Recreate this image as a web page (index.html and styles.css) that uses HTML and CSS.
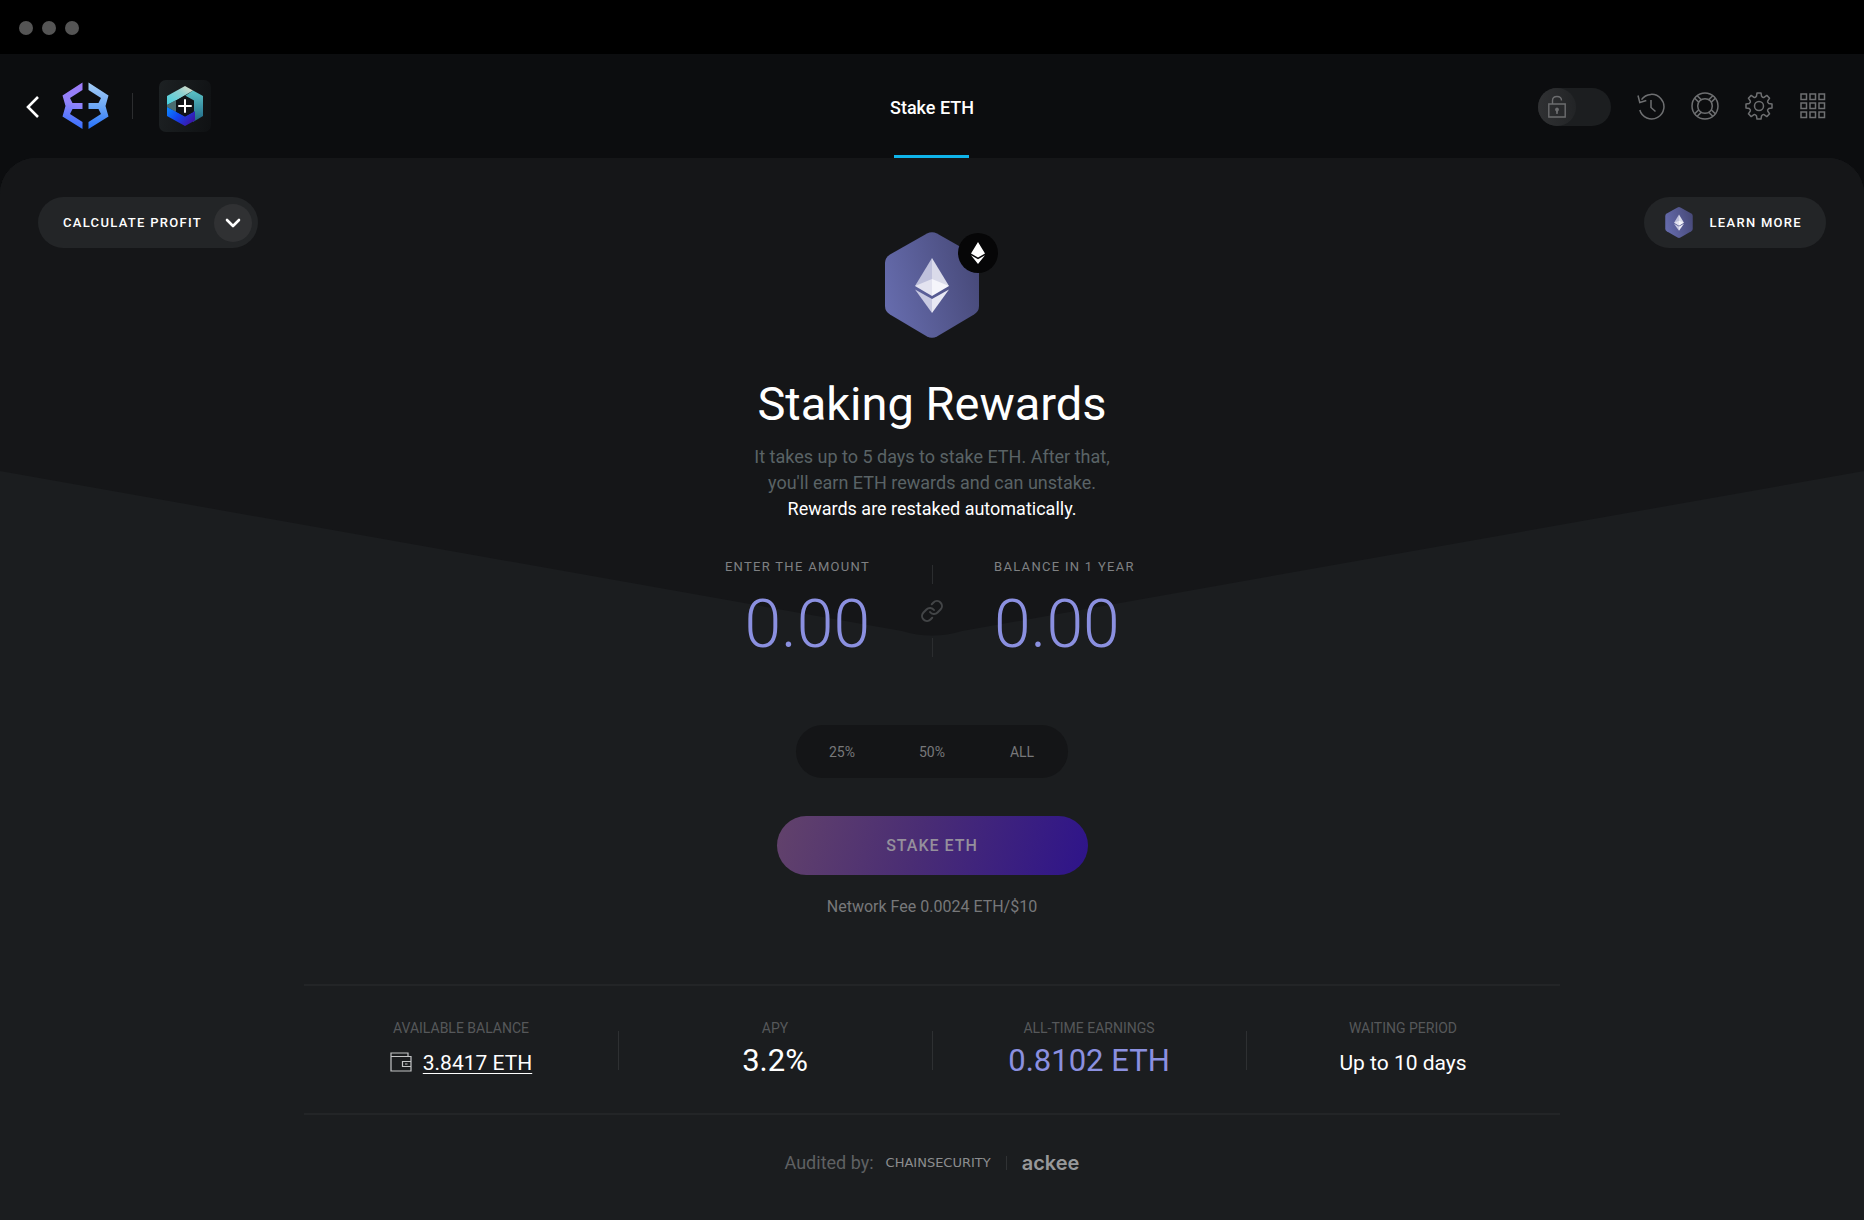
FILE: index.html
```html
<!DOCTYPE html>
<html lang="en">
<head>
<meta charset="utf-8">
<meta name="viewport" content="width=device-width, initial-scale=1">
<title>Stake ETH</title>
<link rel="stylesheet" href="styles.css">
</head>
<body>
<svg class="defs" width="0" height="0" aria-hidden="true">
  <defs>
    <linearGradient id="hex" x1="0" y1=".7" x2="1" y2=".4">
      <stop offset="0" stop-color="#666cad"/><stop offset="1" stop-color="#484a7a"/>
    </linearGradient>
    <linearGradient id="logo-left" x1=".6" y1="0" x2=".5" y2="1">
      <stop offset="0" stop-color="#9d7af8"/><stop offset=".45" stop-color="#9183fa"/><stop offset="1" stop-color="#2e70ff"/>
    </linearGradient>
    <linearGradient id="logo-right" x1=".5" y1="0" x2=".5" y2="1">
      <stop offset="0" stop-color="#a5cdf5"/><stop offset=".5" stop-color="#6ea8f5"/><stop offset="1" stop-color="#2470fb"/>
    </linearGradient>
    <linearGradient id="facet-top" x1="0" y1="1" x2="1" y2="0">
      <stop offset="0" stop-color="#3fd0e0"/><stop offset=".6" stop-color="#8fd0cf"/><stop offset="1" stop-color="#e8dfc8"/>
    </linearGradient>
    <linearGradient id="facet-right" x1="0" y1="0" x2="0" y2="1">
      <stop offset="0" stop-color="#5cc3c6"/><stop offset="1" stop-color="#1d6685"/>
    </linearGradient>
    <linearGradient id="facet-bottom" x1="0" y1="0" x2="1" y2=".6">
      <stop offset="0" stop-color="#0b8dff"/><stop offset=".5" stop-color="#1345ee"/><stop offset="1" stop-color="#3a16a8"/>
    </linearGradient>
    <symbol id="eth-hex" viewBox="0 0 94 106">
      <path fill="url(#hex)" d="M42 1.500q5-2.700 10 0l37 21q5 3 5 8.500v43q0 5.500-5 8.500l-37 22q-5 2.700-10 0l-37-22q-5-3-5-8.500V31q0-5.500 5-8.500z"/>
      <path fill="#bfc1dc" d="M47 26v28L30 54z"/>
      <path fill="#dadbea" d="M47 26v28l17 0z"/>
      <path fill="#e3e3f0" d="M30 54l17-7v17z"/>
      <path fill="#f5f5fb" d="M64 54l-17-7v17z"/>
      <path fill="#c9cae2" d="M30 57.500l17 9.500v14z"/>
      <path fill="#e8e8f4" d="M64 57.500l-17 9.500v14z"/>
    </symbol>
  </defs>
</svg>

<div class="titlebar" aria-hidden="true"><span></span><span></span><span></span></div>

<header class="header">
  <div class="brand">
    <button class="icon-button" type="button" aria-label="Back">
      <svg width="13" height="22" viewBox="0 0 13 22" fill="none" stroke="#fff" stroke-width="2.600"><path d="M12 1L2 11l10 10"/></svg>
    </button>
    <svg class="logo" width="47" height="48" viewBox="0 0 47 48" aria-hidden="true">
      <path fill="url(#logo-left)" d="M20.500.5V8L8 16l2.500 5h10v6h-10L8 32l12.500 8v7L.5 34.500 3.500 24 .5 13.500z"/>
      <path fill="url(#logo-right)" d="M26.500.5V8L39 16l-2.500 5h-10v6h10l2.500 5-12.500 8v7l20-12.500L43.500 24l3-10.500z"/>
    </svg>
    <span class="brand-divider"></span>
    <button class="app-tile" type="button" aria-label="Add portfolio">
      <svg width="36" height="40" viewBox="0 0 36 40">
        <path fill="url(#facet-right)" d="M26 4.500l10 5.500v20l-10 6v-21l-8-5z"/>
        <path fill="url(#facet-top)" d="M0 19V10L18 0l8 4.500-17 10z"/>
        <path fill="#4b6d70" d="M0 19l9-5v12L0 21z"/>
        <path fill="url(#facet-bottom)" d="M0 21l18 9.500L28 25v9.500L18 40 0 30z"/>
        <path fill="#101317" d="M18 9.500l9 5v11l-9 5-9-5v-11z"/>
        <path fill="none" stroke="#fff" stroke-width="2" stroke-linecap="round" d="M12 20h12M18 14v12"/>
      </svg>
    </button>
  </div>

  <nav class="tabs"><a class="tab" href="#stake" aria-current="page">Stake ETH</a></nav>

  <div class="tools">
    <label class="lock-switch">
      <input type="checkbox" role="switch" aria-label="Lock wallet">
      <span class="knob">
        <svg width="18" height="24" viewBox="0 0 18 24" fill="none" stroke="#6c6d6f" stroke-width="1.400">
          <path d="M.8 9h16.400v13H.8zM4.500 9V5.500q0-4 4.500-4t4.500 4"/>
          <path fill="#6c6d6f" stroke="none" d="M9 12.500a2 2 0 0 1 1 3.700l-.3 2.800H8.300L8 16.200a2 2 0 0 1 1-3.700z"/>
        </svg>
      </span>
    </label>
    <button class="icon-button" type="button" aria-label="History">
      <svg class="tool" viewBox="0 0 28 28"><path d="M4.500 7.700A12.300 12.300 0 1 1 2.800 18M1 3.500l1.800 7 6.500-2M14 8v7.500l4.500 4"/></svg>
    </button>
    <button class="icon-button" type="button" aria-label="Support">
      <svg class="tool" viewBox="0 0 28 28"><circle cx="14" cy="14" r="13"/><circle cx="14" cy="14" r="7.300"/><path d="M6.200 3.700l4.200 4.200M3.700 6.200l4.200 4.200M21.800 3.700l-4.200 4.200M24.300 6.200l-4.200 4.200M6.200 24.300l4.200-4.200M3.700 21.800l4.200-4.200M21.800 24.300l-4.200-4.200M24.300 21.800l-4.200-4.200"/></svg>
    </button>
    <button class="icon-button" type="button" aria-label="Settings">
      <svg class="tool" viewBox="-14 -14 28 28"><circle r="4.500"/><path stroke-linejoin="round" d="M-2.600-9.700L-2-13H2L2.600-9.700Q4 -8 5-8.700L7.800-10.600 10.600-7.800 8.700-5Q8-4 9.700-2.600L13-2V2L9.700 2.600Q8 4 8.700 5L10.600 7.800 7.800 10.600 5 8.700Q4 8 2.600 9.700L2 13H-2L-2.600 9.700Q-4 8-5 8.700L-7.800 10.600-10.600 7.800-8.700 5Q-8 4-9.700 2.600L-13 2V-2L-9.700-2.600Q-8-4-8.700-5L-10.600-7.800-7.800-10.600-5-8.700Q-4-8-2.600-9.700z"/></svg>
    </button>
    <button class="icon-button" type="button" aria-label="Apps">
      <svg class="tool" viewBox="0 0 28 28"><path d="M2 2h5.500v5.500H2zM11 2h5.500v5.500H11zM20 2h5.500v5.500H20zM2 11h5.500v5.500H2zM11 11h5.500v5.500H11zM20 11h5.500v5.500H20zM2 20h5.500v5.500H2zM11 20h5.500v5.500H11zM20 20h5.500v5.500H20z"/></svg>
    </button>
  </div>
</header>

<main class="main" id="stake">
  <svg class="backdrop" viewBox="0 0 1864 480" preserveAspectRatio="none" aria-hidden="true">
    <path fill="#151618" d="M0 0H1864V313L962 473Q932 482 902 473L0 313z"/>
  </svg>

  <div class="stage">
    <button class="pill-button calculate" type="button">
      Calculate profit
      <span class="pill-chevron"><svg width="16" height="10" viewBox="0 0 16 10" fill="none" stroke="#fff" stroke-width="2.600" stroke-linecap="round" stroke-linejoin="round"><path d="M2 2l6 6 6-6"/></svg></span>
    </button>

    <section class="hero">
      <div class="coin">
        <svg width="94" height="106" aria-hidden="true"><use href="#eth-hex"/></svg>
        <span class="coin-badge"><svg width="14" height="22" viewBox="0 0 14 22" fill="#fff" aria-hidden="true"><path d="M7 0l7 11.500L7 15.500 0 11.500zM0 13.200l7 4 7-4L7 22z"/></svg></span>
      </div>
      <h1>Staking Rewards</h1>
      <p class="intro">It takes up to 5 days to stake ETH. After that,<br>you'll earn ETH rewards and can unstake.<br><strong>Rewards are restaked automatically.</strong></p>

      <form class="stake-form">
        <div class="amounts">
          <div class="amount amount-enter">
            <label for="amount">Enter the amount</label>
            <input id="amount" type="text" inputmode="decimal" value="0.00">
          </div>
          <div class="linker" aria-hidden="true">
            <svg width="24" height="24" viewBox="0 0 24 24" fill="none" stroke="#434547" stroke-width="2" stroke-linecap="round"><path d="M10 13a5 5 0 0 0 7.540.540l3-3a5 5 0 0 0-7.070-7.070l-1.720 1.710M14 11a5 5 0 0 0-7.540-.540l-3 3a5 5 0 0 0 7.070 7.070l1.710-1.710"/></svg>
          </div>
          <div class="amount">
            <label for="balance">Balance in 1 year</label>
            <input id="balance" type="text" inputmode="decimal" value="0.00">
          </div>
        </div>
        <div class="presets">
          <button type="button">25%</button>
          <button type="button">50%</button>
          <button type="button">ALL</button>
        </div>
        <button class="submit" type="submit">Stake ETH</button>
        <p class="fee">Network Fee 0.0024 ETH/$10</p>
      </form>
    </section>

    <button class="pill-button learn" type="button">
      <svg width="28" height="31" aria-hidden="true"><use href="#eth-hex"/></svg>
      Learn more
    </button>
  </div>

  <dl class="stats">
    <div class="stat">
      <dt>AVAILABLE BALANCE</dt>
      <dd>
        <svg class="wallet" width="22" height="20" viewBox="0 0 22 20" fill="none" stroke="#c4c5c6" stroke-width="1.200" aria-hidden="true"><path d="M18 4.500V1H1v18h20V4.500H1M21 9.500h-8.500v5H21M15 12h2.500"/></svg>
        <a href="#balance">3.8417 ETH</a>
      </dd>
    </div>
    <div class="stat"><dt>APY</dt><dd class="large">3.2%</dd></div>
    <div class="stat"><dt>ALL-TIME EARNINGS</dt><dd class="large accent">0.8102 ETH</dd></div>
    <div class="stat"><dt>WAITING PERIOD</dt><dd>Up to 10 days</dd></div>
  </dl>

  <footer class="audit">
    <span>Audited by:</span>
    <span class="chainsecurity">CHAINSECURITY</span>
    <span class="audit-divider"></span>
    <span class="ackee">ackee</span>
  </footer>
</main>
</body>
</html>
```
FILE: styles.css
```css
* {
  box-sizing: border-box;
}

body {
  display: flex;
  flex-direction: column;
  min-height: 100vh;
  margin: 0;
  background: #0c0d0f;
  color: #fff;
  font-family: Roboto, "Liberation Sans", sans-serif;
}

button,
input {
  padding: 0;
  border: 0;
  background: none;
  color: inherit;
  font: inherit;
}

button {
  cursor: pointer;
}

svg {
  display: block;
}

h1,
p,
dl,
dd {
  margin: 0;
}

.defs {
  position: absolute;
}

/* Window bar */
.titlebar {
  display: flex;
  align-items: center;
  gap: 9px;
  height: 54px;
  padding: 2px 19px 0;
  background: #000;
}

.titlebar span {
  width: 14px;
  height: 14px;
  border-radius: 50%;
  background: #555;
}

/* Header */
.header {
  display: grid;
  grid-template-columns: 1fr auto 1fr;
  height: 104px;
  padding: 0 38px 0 26px;
}

.brand,
.tools {
  display: flex;
  align-items: center;
}

.brand {
  gap: 23px;
}

.brand .icon-button {
  padding-top: 2px;
}

.brand-divider {
  width: 1px;
  height: 26px;
  background: #2c2d2f;
}

.app-tile {
  display: grid;
  place-items: center;
  width: 52px;
  height: 52px;
  margin-left: 3px;
  border-radius: 7px;
  background: linear-gradient(100deg, #1d2123, #0f1113);
}

.tabs {
  display: flex;
  margin-right: -12px;
}

.tab {
  display: flex;
  flex-direction: column;
  align-items: center;
  justify-content: space-between;
  padding-top: 42px;
  color: #fff;
  font-size: 18px;
  font-weight: 500;
  line-height: 24px;
  text-decoration: none;
}

.tab::after {
  content: "";
  width: 75px;
  height: 3px;
  background: #0fb4ea;
}

.tools {
  justify-content: flex-end;
  gap: 26px;
  margin-right: -1px;
}

.tool {
  width: 28px;
  height: 28px;
  fill: none;
  stroke: #6e6f71;
  stroke-width: 1.500;
}

.lock-switch {
  width: 73px;
  height: 38px;
  margin-top: 2px;
  border-radius: 19px;
  background: #1c1e20;
  cursor: pointer;
}

.lock-switch input {
  position: absolute;
  opacity: 0;
}

.knob {
  display: grid;
  place-items: center;
  width: 38px;
  height: 38px;
  border-radius: 50%;
  background: linear-gradient(90deg, #303133, #222426);
}

/* Main panel */
.main {
  position: relative;
  flex: 1;
  overflow: hidden;
  border-radius: 36px 36px 0 0;
  background: #1b1d1f;
}

.backdrop {
  position: absolute;
  top: 0;
  left: 0;
  width: 100%;
  height: 480px;
}

.stage {
  position: relative;
  display: grid;
  grid-template-columns: 1fr auto 1fr;
  align-items: start;
  padding: 39px 38px 0;
}

.pill-button {
  display: flex;
  align-items: center;
  height: 51px;
  border-radius: 26px;
  background: #232527;
  font-size: 13px;
  font-weight: 500;
  letter-spacing: 0.1em;
  text-transform: uppercase;
}

.calculate {
  justify-self: start;
  gap: 12px;
  padding: 0 6px 0 25px;
}

.pill-chevron {
  display: grid;
  place-items: center;
  width: 38px;
  height: 38px;
  border-radius: 50%;
  background: #303133;
}

.learn {
  justify-self: end;
  gap: 17px;
  padding: 0 24px 0 21px;
}

.hero {
  display: flex;
  flex-direction: column;
  align-items: center;
  padding-top: 35px;
  text-align: center;
}

.coin {
  position: relative;
}

.coin-badge {
  position: absolute;
  top: 1px;
  right: -19px;
  display: grid;
  place-items: center;
  width: 40px;
  height: 40px;
  border-radius: 50%;
  background: #060607;
}

h1 {
  margin-top: 38px;
  font-size: 47px;
  font-weight: 400;
  line-height: 56px;
}

.intro {
  margin-top: 12px;
  color: #5a6366;
  font-size: 18px;
  line-height: 26px;
}

.intro strong {
  color: #fff;
  font-weight: 400;
}

/* Stake form */
.stake-form {
  display: flex;
  flex-direction: column;
  align-items: center;
  margin-top: 37px;
}

.amounts {
  display: grid;
  grid-template-columns: 160px 124px 160px;
}

.amount {
  display: flex;
  flex-direction: column;
  gap: 14px;
  text-align: left;
}

.amount-enter {
  text-align: right;
}

.amount label {
  color: #7f8183;
  font-size: 13px;
  letter-spacing: 0.1em;
  line-height: 16px;
  text-transform: uppercase;
}

.amount input {
  width: 100%;
  height: 72px;
  color: #8b90e0;
  font-size: 66px;
  font-weight: 300;
  line-height: 72px;
  text-align: inherit;
}

.linker {
  display: flex;
  flex-direction: column;
  align-items: center;
  gap: 15px;
  padding-top: 6px;
}

.linker::before,
.linker::after {
  content: "";
  width: 1px;
  height: 19px;
  background: #2b2d2f;
}

.presets {
  display: grid;
  grid-template-columns: repeat(3, 90px);
  height: 53px;
  margin-top: 64px;
  padding: 0 1px;
  border-radius: 27px;
  background: #141517;
  color: #77787a;
  font-size: 14px;
}

.submit {
  width: 311px;
  height: 59px;
  margin-top: 38px;
  border-radius: 30px;
  background: linear-gradient(105deg, #62426b, #4a2d74 45%, #2e148a);
  color: #95909c;
  font-size: 16px;
  font-weight: 500;
  letter-spacing: 1px;
  text-transform: uppercase;
}

.fee {
  margin-top: 22px;
  color: #77787a;
  font-size: 16px;
  line-height: 20px;
}

/* Stats */
.stats {
  position: relative;
  display: grid;
  grid-template-columns: repeat(4, 1fr);
  max-width: 1256px;
  height: 131px;
  margin: 67px auto 0;
  padding-top: 33px;
  border: solid #232527;
  border-width: 2px 0;
}

.stat {
  display: grid;
  grid-template-rows: 18px 40px;
  align-content: start;
  align-items: start;
  justify-items: center;
  gap: 6px;
}

.stat + .stat {
  background: linear-gradient(#2e3032, #2e3032) 0 12px / 1px 39px no-repeat;
}

.stat dt {
  color: #56585a;
  font-size: 14px;
  line-height: 18px;
}

.stat dd {
  display: flex;
  align-items: center;
  gap: 11px;
  font-size: 21px;
  line-height: 40px;
}

.stat a {
  color: #fff;
  text-decoration-thickness: 1px;
  text-underline-offset: 3px;
}

.wallet {
  margin-bottom: 3px;
}

.stat .large {
  font-size: 31px;
  line-height: 36px;
}

.stat .accent {
  color: #8b90e0;
}

/* Auditors */
.audit {
  position: relative;
  display: flex;
  align-items: center;
  justify-content: center;
  margin: 36px 0 40px;
  color: #5f6163;
  font-size: 18px;
  line-height: 24px;
}

.chainsecurity {
  margin-left: 12px;
  color: #8c8d8f;
  font-family: "DejaVu Sans", sans-serif;
  font-size: 13px;
}

.audit-divider {
  width: 1px;
  height: 14px;
  margin: 0 15px;
  background: #303234;
}

.ackee {
  color: #97989a;
  font-family: Inter, sans-serif;
  font-size: 20px;
  font-weight: 600;
}
```
